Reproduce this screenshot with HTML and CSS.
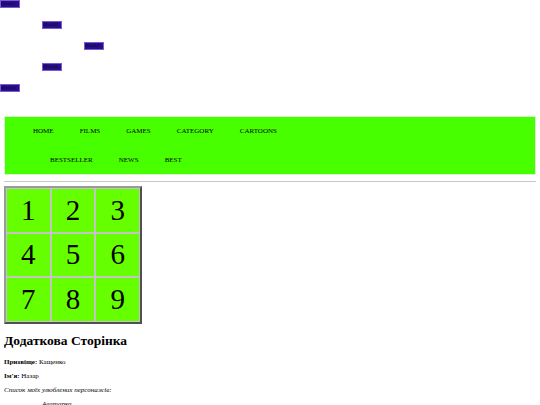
FILE: index.html
```html
<!DOCTYPE html>
<html lang="uk">
<head>
<meta charset="utf-8">
<title>Додаткова Сторінка</title>
<link rel="stylesheet" href="styles.css">
</head>
<body>
<div class="blocks">
  <div class="block">Block1</div>
  <div class="block indent1">Block2</div>
  <div class="block indent2">Block3</div>
  <div class="block indent1">Block4</div>
  <div class="block">Block5</div>
</div>
<div class="page">
  <nav class="menu">
    <ul class="menu-row first">
      <li>HOME</li>
      <li>FILMS</li>
      <li>GAMES</li>
      <li>CATEGORY</li>
      <li>CARTOONS</li>
    </ul>
    <ul class="menu-row second">
      <li>BESTSELLER</li>
      <li>NEWS</li>
      <li>BEST</li>
    </ul>
  </nav>
  <hr class="rule">
  <table class="grid">
    <tr><td>1</td><td>2</td><td>3</td></tr>
    <tr><td>4</td><td>5</td><td>6</td></tr>
    <tr><td>7</td><td>8</td><td>9</td></tr>
  </table>
  <h2 class="title">Додаткова Сторінка</h2>
  <p class="info"><b>Призвіще:</b> Кащенко</p>
  <p class="info"><b>Ім'я:</b> Назар</p>
  <p class="info"><i>Список моїх улюблених персонажів:</i></p>
  <ul class="chars">
    <li>Аватарка</li>
  </ul>
</div>
</body>
</html>
```
FILE: styles.css
```css
html, body {
  margin: 0;
  padding: 0;
  background: #ffffff;
  font-family: "Liberation Serif", "Times New Roman", serif;
  color: #000;
}
.blocks {
  display: flex;
  flex-direction: column;
  align-items: flex-start;
}
.block {
  box-sizing: border-box;
  width: 20px;
  height: 8px;
  margin-bottom: 13px;
  background: #2a0e86;
  border: 1px solid #7a5ad6;
  font-size: 5px;
  line-height: 6px;
  color: #0b0630;
  overflow: hidden;
  white-space: nowrap;
}
.indent1 { margin-left: 42px; }
.indent2 { margin-left: 84px; }
.page {
  padding: 0 4px;
}
.menu {
  margin-top: 11px;
  background: #48ff00;
  border: 1px solid #d6f5cc;
}
.menu-row {
  list-style: none;
  margin: 0;
  display: flex;
  gap: 26px;
  font-size: 7px;
  line-height: 8px;
}
.menu-row.first {
  padding: 10px 0 11px 28px;
}
.menu-row.second {
  padding: 10px 0 10px 45px;
}
.rule {
  margin: 6px 0 4px;
  border: 0;
  border-top: 1px solid #c8c8c8;
  height: 0;
}
.grid {
  width: 138px;
  height: 138px;
  table-layout: fixed;
  border-collapse: separate;
  border-spacing: 0;
  border: 2px solid;
  border-color: #9a9a9a #505050 #505050 #9a9a9a;
}
.grid td {
  border: 1px solid #c4c4c4;
  background: #66ff00;
  text-align: center;
  vertical-align: middle;
  font-size: 29px;
  padding: 0;
}
.title {
  font-size: 13.5px;
  margin: 9px 0 9px;
}
.info {
  font-size: 7px;
  margin: 6px 0;
  line-height: 8px;
}
.chars {
  font-size: 7px;
  margin: 6px 0;
  padding-left: 38px;
  list-style: none;
  font-style: italic;
}
```
